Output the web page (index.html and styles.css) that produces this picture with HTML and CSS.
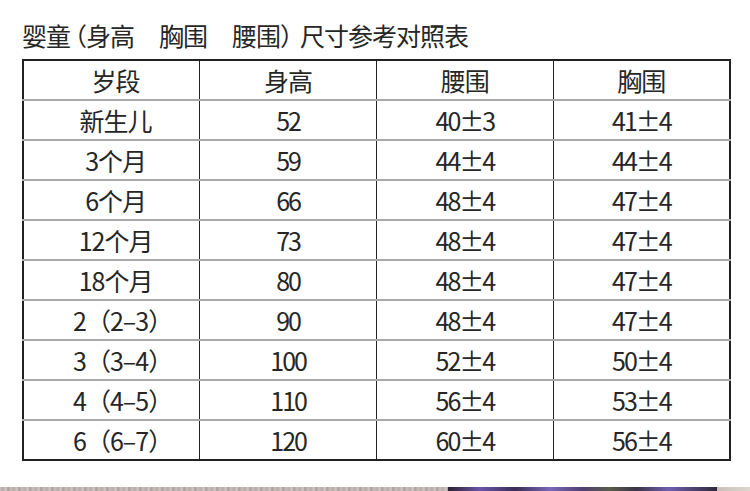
FILE: index.html
```
<!DOCTYPE html>
<html lang="zh-CN">
<head>
<meta charset="utf-8">
<title>婴童尺寸参考对照表</title>
<link rel="stylesheet" href="styles.css">
</head>
<body>
<div class="page">
  <h1 class="title">婴<span class="tight-l">童</span>（身高<span class="gap"></span>胸围<span class="gap"></span>腰围<span class="tight-r">）</span>尺寸参考对照表</h1>
  <table class="size-table">
    <thead>
      <tr><th>岁段</th><th>身高</th><th>腰围</th><th>胸围</th></tr>
    </thead>
    <tbody>
      <tr><td>新生儿</td><td class="num">52</td><td class="num">40±3</td><td class="num">41±4</td></tr>
      <tr><td>3个月</td><td class="num">59</td><td class="num">44±4</td><td class="num">44±4</td></tr>
      <tr><td>6个月</td><td class="num">66</td><td class="num">48±4</td><td class="num">47±4</td></tr>
      <tr><td>12个月</td><td class="num">73</td><td class="num">48±4</td><td class="num">47±4</td></tr>
      <tr><td>18个月</td><td class="num">80</td><td class="num">48±4</td><td class="num">47±4</td></tr>
      <tr><td class="range">2（2–3）</td><td class="num">90</td><td class="num">48±4</td><td class="num">47±4</td></tr>
      <tr><td class="range">3（3–4）</td><td class="num">100</td><td class="num">52±4</td><td class="num">50±4</td></tr>
      <tr><td class="range">4（4–5）</td><td class="num">110</td><td class="num">56±4</td><td class="num">53±4</td></tr>
      <tr><td class="range">6（6–7）</td><td class="num">120</td><td class="num">60±4</td><td class="num">56±4</td></tr>
    </tbody>
  </table>
</div>
<div class="photo-strip">
  <div class="strip-wood"></div>
  <div class="strip-flower"></div>
  <div class="strip-light"></div>
</div>
</body>
</html>
```
FILE: styles.css
```
html, body {
  margin: 0;
  padding: 0;
  background: #ffffff;
}
body {
  width: 750px;
  height: 491px;
  overflow: hidden;
  font-family: "Noto Sans CJK SC", "Noto Sans", sans-serif;
  color: #262626;
}
.page {
  padding: 0 19px 0 22px;
  height: 487px;
  box-sizing: border-box;
}
.title {
  margin: 0;
  padding-top: 20px;
  font-size: 25px;
  line-height: 30px;
  font-weight: 400;
  letter-spacing: -1px;
  white-space: nowrap;
  color: #262626;
}
.title .gap {
  display: inline-block;
  width: 25px;
}
.title .tight-l {
  letter-spacing: -9px;
}
.title .tight-r {
  letter-spacing: -5px;
}
.size-table {
  margin-top: 9px;
  width: 709px;
  border-collapse: collapse;
  table-layout: fixed;
  border: 2px solid #222222;
}
.size-table th,
.size-table td {
  height: 38px;
  padding: 0;
  text-align: center;
  vertical-align: middle;
  font-size: 25px;
  font-weight: 400;
  line-height: 30px;
  letter-spacing: -1px;
  white-space: nowrap;
  border-left: 1px solid #222222;
  border-right: 1px solid #222222;
  border-top: 2px solid #a9a9a9;
  border-bottom: 2px solid #a9a9a9;
}
.size-table td.num {
  letter-spacing: -2px;
}
.size-table thead th {
  border-top: 2px solid #222222;
}
.size-table tbody tr:last-child td {
  border-bottom: 2px solid #222222;
}
.size-table th:first-child,
.size-table td:first-child {
  border-left: 2px solid #222222;
  padding-left: 8px;
}
.size-table td.range {
  padding-left: 22px;
}
.size-table th:last-child,
.size-table td:last-child {
  border-right: 2px solid #222222;
}
.photo-strip {
  display: flex;
  height: 4px;
}
.strip-wood {
  width: 448px;
  background: repeating-linear-gradient(90deg, #c9bdb9 0px, #b7aaa7 3px, #d3c9c5 6px, #a99c9a 8px, #cbc0bc 11px);
}
.strip-flower {
  width: 269px;
  background: linear-gradient(90deg, #2b2232 0%, #6a56a8 12%, #3a2d55 25%, #7a68b8 38%, #504070 50%, #5a5e4a 60%, #3b3448 70%, #6f5fae 82%, #2f2838 100%);
}
.strip-light {
  flex: 1;
  background: linear-gradient(90deg, #c8c0b8, #ddd6cf);
}
```
